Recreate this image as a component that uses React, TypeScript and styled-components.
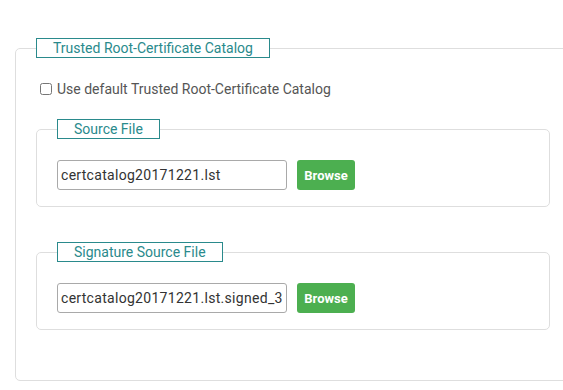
import React from 'react'
import styled, { createGlobalStyle } from 'styled-components'

const GlobalStyle = createGlobalStyle`
  html, body {
    margin: 0;
    padding: 0;
    background: #fff;
    overflow: hidden;
  }
  body {
    font-family: Roboto, "Liberation Sans", Arial, sans-serif;
  }
`

const Page = styled.div`
  box-sizing: border-box;
  width: 563px;
  height: 390px;
  overflow: hidden;
  padding: 38px 0 0 15px;
`

const Group = styled.fieldset<{ $outer?: boolean }>`
  margin: ${(p) => (p.$outer ? '0' : '0 0 35px 0')};
  width: ${(p) => (p.$outer ? '556px' : 'auto')};
  box-sizing: border-box;
  border: 1px solid #dedede;
  border-radius: 5px;
  padding: ${(p) => (p.$outer ? '0 20px 50px 20px' : '0 20px 16px 20px')};
  min-width: 0;

  &:last-child {
    margin-bottom: 0;
  }
`

const Legend = styled.legend`
  box-sizing: border-box;
  height: 20px;
  line-height: 18px;
  padding: 0 16px;
  border: 1px solid #2a8a8c;
  color: #2a8a8c;
  font-size: 14px;
  margin-left: 0;
`

const CheckRow = styled.label`
  display: flex;
  align-items: center;
  height: 24px;
  margin: 19px 0 18px 0;
  font-size: 14px;
  color: #555;
  cursor: pointer;
`

const Check = styled.input`
  width: 12px;
  height: 12px;
  margin: 0 5px 0 4px;
  accent-color: #ccc;
`

const Row = styled.div`
  display: flex;
  align-items: center;
  gap: 10px;
  margin-top: 21px;
`

const PathInput = styled.input`
  box-sizing: border-box;
  width: 230px;
  height: 30px;
  padding: 0 3px;
  border: 1px solid #a9a9a9;
  border-radius: 3px;
  font-family: Roboto, "Liberation Sans", Arial, sans-serif;
  font-size: 14px;
  letter-spacing: 0.3px;
  color: #333;
  outline: none;
`

const BrowseButton = styled.button`
  box-sizing: border-box;
  width: 58px;
  height: 30px;
  padding: 0;
  border: none;
  border-radius: 3px;
  background: #4caf50;
  color: #fff;
  font-family: Roboto, "Liberation Sans", Arial, sans-serif;
  font-weight: bold;
  font-size: 13px;
  cursor: pointer;
`

function FileGroup(props: { title: string; value: string }) {
  return (
    <Group>
      <Legend>{props.title}</Legend>
      <Row>
        <PathInput type="text" defaultValue={props.value} />
        <BrowseButton>Browse</BrowseButton>
      </Row>
    </Group>
  )
}

export default function App() {
  return (
    <Page>
      <GlobalStyle />
      <Group $outer>
        <Legend>Trusted Root-Certificate Catalog</Legend>
        <CheckRow>
          <Check type="checkbox" />
          Use default Trusted Root-Certificate Catalog
        </CheckRow>
        <FileGroup title="Source File" value="certcatalog20171221.lst" />
        <FileGroup
          title="Signature Source File"
          value="certcatalog20171221.lst.signed_32"
        />
      </Group>
    </Page>
  )
}
